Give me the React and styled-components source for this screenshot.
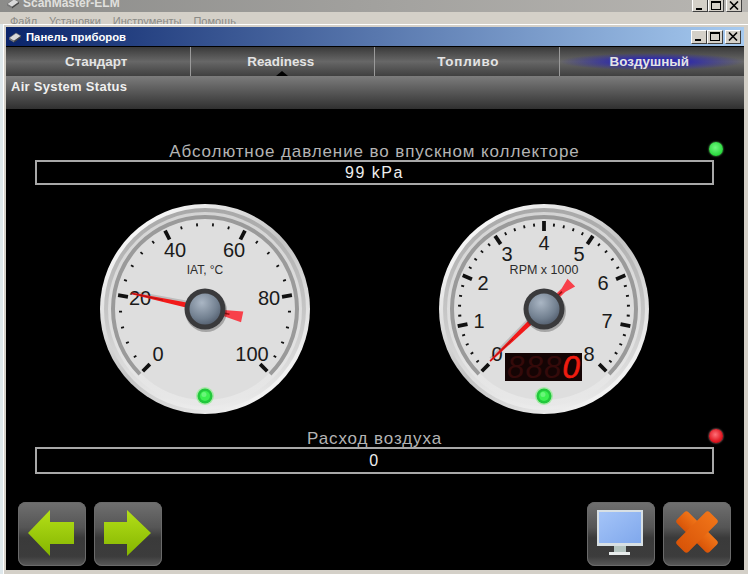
import styled, { createGlobalStyle } from "styled-components";

const GlobalStyle = createGlobalStyle`
    html, body {
        margin: 0;
        padding: 0;
        background: #000;
    }
    * {
        box-sizing: border-box;
    }
`;

const polar = (angle, r) => {
    const a = ((angle - 90) * Math.PI) / 180;
    return [105 + r * Math.cos(a), 105 + r * Math.sin(a)];
};

function Ticks({ majors, minors }) {
    const total = majors * (minors + 1);
    const items = [];
    for (let i = 0; i <= total; i++) {
        const angle = -135 + (270 * i) / total;
        const major = i % (minors + 1) === 0;
        const [x1, y1] = polar(angle, major ? 88 : 86);
        const [x2, y2] = polar(angle, major ? 78 : 83);
        items.push(
            <line key={i} x1={x1} y1={y1} x2={x2} y2={y2} stroke="#111" strokeWidth={major ? 3.8 : 1.8} />
        );
    }
    return <g>{items}</g>;
}

function Hub() {
    return (
        <g>
            <circle cx="106" cy="107" r="21" fill="#000" opacity="0.25" />
            <circle cx="105" cy="105" r="20.5" fill="#3a3a3c" />
            <circle cx="105" cy="105" r="15.5" fill="url(#hubFill)" />
        </g>
    );
}

function Lamp({ cx, cy }) {
    return (
        <g>
            <circle cx={cx} cy={cy} r="9" fill="#a8e8a8" />
            <circle cx={cx} cy={cy} r="7.5" fill="#22c83c" />
            <circle cx={cx} cy={cy} r="5" fill="#3cf050" />
            <circle cx={cx - 1} cy={cy - 1.5} r="2.5" fill="#7cf88c" opacity="0.7" />
        </g>
    );
}

function Gauge({ id, title, titleSize, labels, majors, needle, children }) {
    const [a, b] = polar(-135, 92);
    const [c, d] = polar(135, 92);
    return (
        <svg width="210" height="210" viewBox="0 0 210 210">
            <defs>
                <linearGradient id={`${id}Rim`} x1="0.15" y1="0.1" x2="0.85" y2="0.9">
                    <stop offset="0" stopColor="#fafafa" />
                    <stop offset="0.5" stopColor="#c4c4c4" />
                    <stop offset="1" stopColor="#f6f6f6" />
                </linearGradient>
                <linearGradient id={`${id}Bezel`} x1="0" y1="0" x2="0" y2="1">
                    <stop offset="0" stopColor="#a8a8a8" />
                    <stop offset="0.55" stopColor="#c8c8c8" />
                    <stop offset="1" stopColor="#ececec" />
                </linearGradient>
                <linearGradient id={`${id}Inner`} x1="0" y1="0" x2="0" y2="1">
                    <stop offset="0" stopColor="#d4d4d4" />
                    <stop offset="1" stopColor="#e8e8e8" />
                </linearGradient>
                <radialGradient id="hubFill" cx="0.4" cy="0.3" r="0.85">
                    <stop offset="0" stopColor="#aab6c4" />
                    <stop offset="0.6" stopColor="#728090" />
                    <stop offset="1" stopColor="#465060" />
                </radialGradient>
            </defs>
            <circle cx="105" cy="105" r="105" fill={`url(#${id}Rim)`} />
            <circle cx="105" cy="105" r="101" fill={`url(#${id}Bezel)`} />
            <circle cx="105" cy="105" r="97" fill={`url(#${id}Inner)`} />
            <circle cx="105" cy="105" r="91" fill="#dedede" />
            <path d={`M${a} ${b} A92 92 0 1 1 ${c} ${d}`} fill="none" stroke="#9a9a9a" strokeWidth="4" />
            <Ticks majors={majors} minors={4} />
            {labels.map(([text, dx, dy]) => (
                <text key={text} x={105 + dx} y={105 + dy + 7} fontFamily="'Liberation Sans', Arial, sans-serif" fontSize="20" textAnchor="middle" fill="#1a1a1a">
                    {text}
                </text>
            ))}
            <text x="105" y="70" fontFamily="'Liberation Sans', Arial, sans-serif" fontSize={titleSize} textAnchor="middle" fill="#2c2c2c">
                {title}
            </text>
            {children}
            {needle}
            <Hub />
            <Lamp cx={105} cy={192} />
        </svg>
    );
}

function Needle({ angle, flareAt }) {
    return (
        <g transform={`rotate(${angle} 105 105)`}>
            <polygon points="102,105 108,105 105.8,30 104.2,30" fill="#000" opacity="0.15" transform="translate(2 2)" />
            <polygon points="102,105 108,105 105.9,30 104.1,30" fill="#f21a1a" />
            <line x1="105" y1="30" x2="105" y2="62" stroke="#a01010" strokeWidth="0.8" />
            <polygon points={`102.5,105 107.5,105 107.5,${flareAt} 110.5,143 99.5,143 102.5,${flareAt}`} fill="#f8404a" />
            <rect x="104.2" y="108" width="1.6" height="22" fill="#a01010" />
        </g>
    );
}

function LedDisplay() {
    const digit = {
        fontFamily: "'Liberation Sans', sans-serif",
        fontStyle: "italic",
        fontSize: 31,
    };
    return (
        <g>
            <rect x="66" y="149" width="77" height="28" fill="#140404" />
            {[0, 1, 2].map((i) => (
                <text key={i} x={68 + i * 18.5} y="174" {...digit} fill="#340a0a">
                    8
                </text>
            ))}
            <text x="123.5" y="174" {...digit} fill="#f01c10" stroke="#f01c10" strokeWidth="0.7">
                0
            </text>
        </g>
    );
}

function ChipIcon() {
    return (
        <svg width="14" height="12" viewBox="0 0 14 12">
            <polygon points="1,7 8,2 13,5 6,10" fill="#d8d8d8" stroke="#666" strokeWidth="0.6" />
            <polygon points="1,7 6,10 6,11.5 1,8.5" fill="#777" />
            <polygon points="6,10 13,5 13,6.5 6,11.5" fill="#444" />
        </svg>
    );
}

function WindowControls() {
    return (
        <Controls>
            <ControlButton>
                <svg width="10" height="9" viewBox="0 0 10 9">
                    <rect x="1" y="7" width="6" height="2" fill="#000" />
                </svg>
            </ControlButton>
            <ControlButton>
                <svg width="10" height="9" viewBox="0 0 10 9">
                    <rect x="0.5" y="0.5" width="9" height="8" fill="none" stroke="#000" />
                    <rect x="0" y="0" width="10" height="2" fill="#000" />
                </svg>
            </ControlButton>
            <ControlButton $gap>
                <svg width="10" height="9" viewBox="0 0 10 9">
                    <path d="M1 0.5 L9 8.5 M9 0.5 L1 8.5" stroke="#000" strokeWidth="1.6" />
                </svg>
            </ControlButton>
        </Controls>
    );
}

const iatLabels = [
    ["0", -47, 45],
    ["20", -65, -11],
    ["40", -30, -59],
    ["60", 29, -59],
    ["80", 64, -11],
    ["100", 47, 45],
];

const rpmLabels = [
    ["0", -47, 45],
    ["1", -65, 12],
    ["2", -61, -26],
    ["3", -37, -55],
    ["4", 0, -66],
    ["5", 35, -55],
    ["6", 59, -26],
    ["7", 63, 12],
    ["8", 45, 45],
];

const tabs = [
    { name: "Стандарт", nudge: "0 3px 0 0" },
    { name: "Readiness", nudge: "0 3px 0 0", active: true },
    { name: "Топливо", nudge: "0 0 0 3px", spacing: "0.8px" },
    { name: "Воздушный", nudge: "0 5px 0 0", glow: true },
];

export default function App() {
    return (
        <>
            <GlobalStyle />
            <Page>
                <MainTitle>
                    <MainName>
                        <ChipIcon />
                        ScanMaster-ELM
                    </MainName>
                    <WindowControls />
                </MainTitle>
                <MainMenu>
                    <span>Файл</span>
                    <span>Установки</span>
                    <span>Инструменты</span>
                    <span>Помощь</span>
                </MainMenu>
                <ChildWindow>
                    <ChildTitle>
                        <ChildName>
                            <ChipIcon />
                            Панель приборов
                        </ChildName>
                        <WindowControls />
                    </ChildTitle>
                    <Panel>
                        <Tabs>
                            {tabs.map(({ name, nudge, spacing, active, glow }) => (
                                <Tab key={name} $nudge={nudge} $spacing={spacing} $active={active} $glow={glow}>
                                    {name}
                                </Tab>
                            ))}
                        </Tabs>
                        <SectionHeader>Air System Status</SectionHeader>
                        <Content>
                            <Metric $top="33px">
                                <MetricLabel>Абсолютное давление во впускном коллекторе</MetricLabel>
                                <StatusLed />
                                <MetricValue $height="25px">99 kPa</MetricValue>
                            </Metric>
                            <Gauges>
                                <Gauge id="iat" title="IAT, °C" titleSize="12" labels={iatLabels} majors={5} needle={<Needle angle={-78} flareAt={120} />} />
                                <Gauge id="rpm" title="RPM x 1000" titleSize="12.5" labels={rpmLabels} majors={8} needle={<Needle angle={-134} flareAt={132} />}>
                                    <LedDisplay />
                                </Gauge>
                            </Gauges>
                            <Metric $top="15px">
                                <MetricLabel>Расход воздуха</MetricLabel>
                                <StatusLed $red />
                                <MetricValue $height="27px">0</MetricValue>
                            </Metric>
                            <Footer>
                                <ButtonGroup>
                                    <IconButton>
                                        <svg width="68" height="64" viewBox="0 0 68 64">
                                            <defs>
                                                <linearGradient id="greenFill" x1="0" y1="0" x2="0" y2="1">
                                                    <stop offset="0" stopColor="#b4e018" />
                                                    <stop offset="1" stopColor="#84b400" />
                                                </linearGradient>
                                            </defs>
                                            <polygon points="10,31 32,8 32,20 56,20 56,42 32,42 32,54" fill="url(#greenFill)" />
                                        </svg>
                                    </IconButton>
                                    <IconButton>
                                        <svg width="68" height="64" viewBox="0 0 68 64">
                                            <polygon points="57,31 33,8 33,20 10,20 10,42 33,42 33,54" fill="url(#greenFill)" />
                                        </svg>
                                    </IconButton>
                                </ButtonGroup>
                                <ButtonGroup>
                                    <IconButton>
                                        <svg width="68" height="64" viewBox="0 0 68 64">
                                            <defs>
                                                <linearGradient id="screenFill" x1="0" y1="0" x2="1" y2="1">
                                                    <stop offset="0" stopColor="#a4c4f8" />
                                                    <stop offset="1" stopColor="#80a8ec" />
                                                </linearGradient>
                                            </defs>
                                            <rect x="10" y="8" width="46" height="36" fill="#d8e0e4" />
                                            <rect x="12" y="10" width="42" height="31" fill="url(#screenFill)" />
                                            <rect x="27" y="44" width="12" height="6" fill="#b4c4c0" />
                                            <rect x="22" y="50" width="21" height="3" fill="#e8ecec" />
                                        </svg>
                                    </IconButton>
                                    <IconButton>
                                        <svg width="68" height="64" viewBox="0 0 68 64">
                                            <defs>
                                                <linearGradient id="orangeFill" x1="0" y1="0" x2="0" y2="1">
                                                    <stop offset="0" stopColor="#f07418" />
                                                    <stop offset="1" stopColor="#d85408" />
                                                </linearGradient>
                                            </defs>
                                            <g transform="rotate(45 34 30)" fill="url(#orangeFill)">
                                                <rect x="11" y="22" width="46" height="16" rx="3" />
                                                <rect x="26" y="7" width="16" height="46" rx="3" />
                                            </g>
                                        </svg>
                                    </IconButton>
                                </ButtonGroup>
                            </Footer>
                        </Content>
                    </Panel>
                </ChildWindow>
            </Page>
        </>
    );
}

const Page = styled.div`
    width: 748px;
    height: 574px;
    overflow: hidden;
    display: flex;
    flex-direction: column;
    background: #dfe8ec;
    font-family: "Liberation Sans", Arial, sans-serif;
`;

const MainTitle = styled.div`
    height: 12px;
    flex: none;
    display: flex;
    justify-content: space-between;
    align-items: flex-end;
    padding: 0 6px;
    background: linear-gradient(90deg, #8c8c8a, #b8b6b2);
    overflow: hidden;
`;

const MainName = styled.div`
    display: flex;
    align-items: center;
    gap: 3px;
    color: #e0e0de;
    font-size: 12px;
    font-weight: bold;
    line-height: 14px;
    margin-bottom: 2px;
`;

const Controls = styled.div`
    display: flex;
`;

const ControlButton = styled.div`
    width: 16px;
    height: 14px;
    margin-left: ${(p) => (p.$gap ? "2px" : "0")};
    display: flex;
    align-items: center;
    justify-content: center;
    background: #d4d0c8;
    border: 1px solid;
    border-color: #fff #404040 #404040 #fff;
`;

const MainMenu = styled.div`
    height: 12px;
    flex: none;
    display: flex;
    gap: 12px;
    padding-left: 10px;
    background: #d4d0c8;
    color: #8a8a86;
    font-size: 11px;
    line-height: 19px;
    overflow: hidden;
`;

const ChildWindow = styled.div`
    flex: 1;
    min-height: 0;
    margin-left: 3px;
    padding: 2px 4px 4px 2px;
    display: flex;
    flex-direction: column;
    background: #d4d0c8;
    border-top: 1px solid #fff;
    border-left: 1px solid #fff;
`;

const ChildTitle = styled.div`
    height: 19px;
    flex: none;
    display: flex;
    justify-content: space-between;
    align-items: center;
    padding: 0 3px 0 2px;
    background: linear-gradient(90deg, #0a246a, #a6caf0);
`;

const ChildName = styled.div`
    display: flex;
    align-items: center;
    gap: 4px;
    color: #fff;
    font-size: 11.3px;
    font-weight: bold;
`;

const Panel = styled.div`
    flex: 1;
    min-height: 0;
    display: flex;
    flex-direction: column;
    background: #000;
`;

const Tabs = styled.div`
    height: 30px;
    flex: none;
    display: grid;
    grid-template-columns: repeat(4, 1fr);
    border-top: 1px solid #000;
    background: linear-gradient(#3a3a3a, #676767 50%, #404040);
`;

const Tab = styled.div`
    position: relative;
    display: flex;
    align-items: center;
    justify-content: center;
    padding: ${(p) => p.$nudge};
    color: #e4e4e4;
    font-size: 13.4px;
    font-weight: bold;
    letter-spacing: ${(p) => p.$spacing || "normal"};
    border-right: 1px solid #9a9a9a;
    background: ${(p) => (p.$glow ? "radial-gradient(closest-side, #2e2aa8 35%, rgba(46, 42, 168, 0)) center / 100% 60% no-repeat" : "none")};

    &:last-child {
        border-right: none;
    }

    &::after {
        content: "";
        display: ${(p) => (p.$active ? "block" : "none")};
        position: absolute;
        left: 50%;
        bottom: 0;
        margin-left: -6px;
        border: 6px solid transparent;
        border-top: none;
        border-bottom: 5px solid #000;
    }
`;

const SectionHeader = styled.div`
    height: 33px;
    flex: none;
    padding: 3px 0 0 5px;
    color: #f0f0f0;
    font-size: 13px;
    font-weight: bold;
    line-height: 15px;
    letter-spacing: 0.3px;
    background: linear-gradient(#7c7c7c, #303030);
`;

const Content = styled.div`
    flex: 1;
    min-height: 0;
    display: flex;
    flex-direction: column;
`;

const Metric = styled.div`
    position: relative;
    margin: ${(p) => p.$top} 30px 0 29px;
    display: flex;
    flex-direction: column;
    align-items: stretch;
`;

const MetricLabel = styled.div`
    height: 18px;
    text-align: center;
    color: #b4b4b4;
    font-size: 17px;
    line-height: 20px;
    letter-spacing: 0.9px;
`;

const MetricValue = styled.div`
    height: ${(p) => p.$height};
    display: flex;
    align-items: center;
    justify-content: center;
    color: #eee;
    font-size: 16px;
    letter-spacing: 1.5px;
    border: 2px solid #a8a8a8;
`;

const StatusLed = styled.div`
    position: absolute;
    right: -9px;
    top: 0;
    width: 14px;
    height: 14px;
    border-radius: 50%;
    background: ${(p) => (p.$red ? "radial-gradient(circle at 45% 40%, #ff7078, #e01822 60%, #a01018)" : "radial-gradient(circle at 45% 40%, #70f880, #28d83c 70%, #189028)")};
    box-shadow: 0 0 2px ${(p) => (p.$red ? "#ffb0b0" : "#70e070")};
`;

const Gauges = styled.div`
    margin-top: 19px;
    padding: 0 95px 0 94px;
    display: flex;
    justify-content: space-between;
`;

const Footer = styled.div`
    margin-top: 28px;
    padding: 0 13px 0 12px;
    display: flex;
    justify-content: space-between;
`;

const ButtonGroup = styled.div`
    display: flex;
    gap: 8px;
`;

const IconButton = styled.div`
    width: 68px;
    height: 64px;
    border-radius: 8px;
    overflow: hidden;
    background: linear-gradient(#707070, #555 40%, #3a3a3a 56%, #3c3c3c 85%, #5a5a5a);
    box-shadow: inset 0 0 0 1px #6a6a6a;
`;
